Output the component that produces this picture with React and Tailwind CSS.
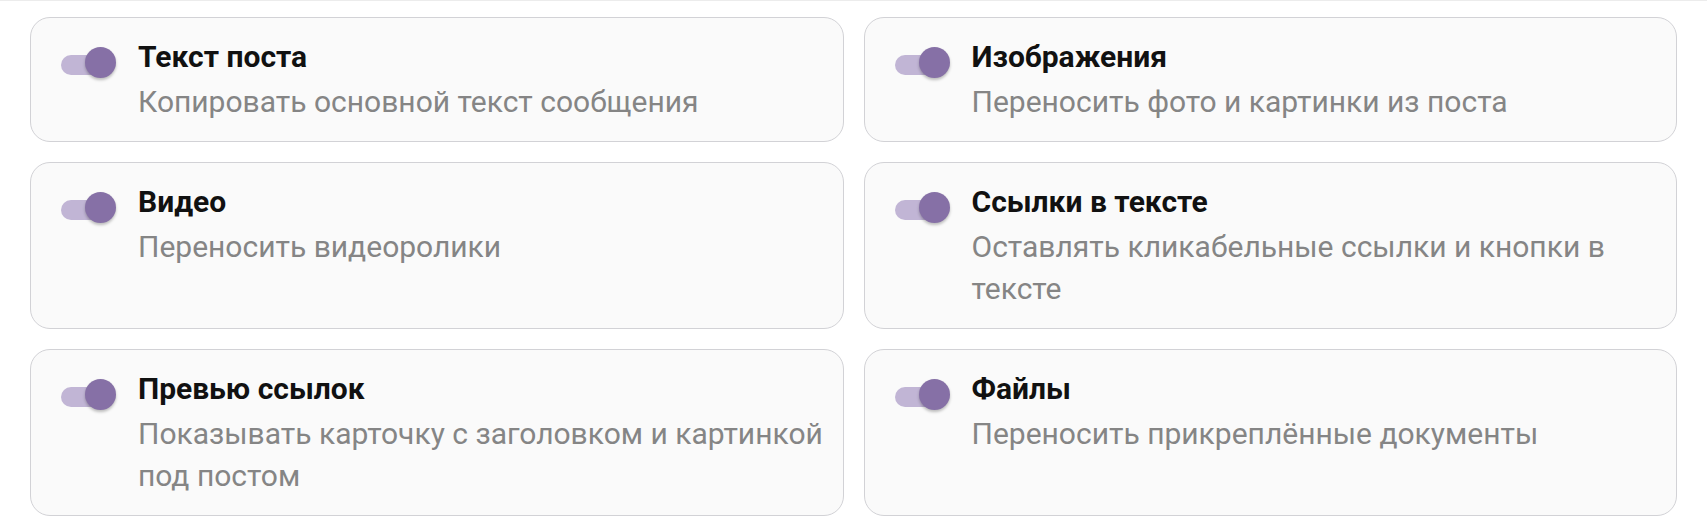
import React from "react";

const items = [
  { title: "Текст поста", desc: "Копировать основной текст сообщения" },
  { title: "Изображения", desc: "Переносить фото и картинки из поста" },
  { title: "Видео", desc: "Переносить видеоролики" },
  { title: "Ссылки в тексте", desc: "Оставлять кликабельные ссылки и кнопки в тексте" },
  { title: "Превью ссылок", desc: "Показывать карточку с заголовком и картинкой под постом" },
  { title: "Файлы", desc: "Переносить прикреплённые документы" },
];

function Toggle() {
  return (
    <div className="relative mt-[11px] h-[31px] w-[55px] shrink-0">
      <div className="absolute left-0 top-[8px] h-[20px] w-[50px] rounded-full bg-[#c1b5d5]" />
      <div className="absolute right-0 top-0 h-[31px] w-[31px] rounded-full bg-[#8670a6] shadow-[0_2px_3px_rgba(0,0,0,0.25)]" />
    </div>
  );
}

export default function App() {
  return (
    <div
      className="min-h-[526px] w-full border-t border-[#ececec] bg-white px-[30px] pt-[16px]"
      style={{ fontFamily: "Roboto, 'Noto Sans', sans-serif" }}
    >
      <div className="grid grid-cols-2 gap-x-[20px] gap-y-[20px]">
        {items.map((it) => (
          <div
            key={it.title}
            className="flex rounded-[20px] border border-[#d2d2d6] bg-[#fafafa] py-[18px] pl-[30px] pr-[14px]"
          >
            <Toggle />
            <div className="ml-[22px] min-w-0">
              <div className="mb-[3px] text-[30px] font-bold leading-[42px] text-[#111111]">
                {it.title}
              </div>
              <div className="text-[30px] leading-[42px] text-[#858585]">{it.desc}</div>
            </div>
          </div>
        ))}
      </div>
    </div>
  );
}
